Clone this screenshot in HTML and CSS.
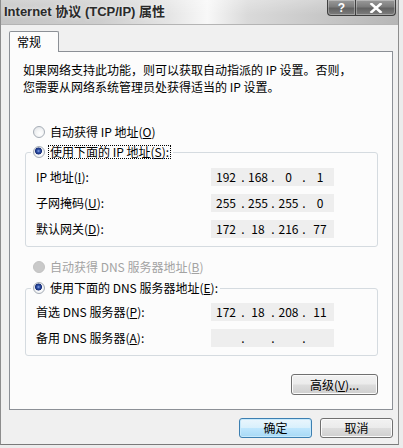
FILE: index.html
```html
<!DOCTYPE html>
<html lang="zh-CN">
<head>
<meta charset="utf-8">
<title>Internet 协议 (TCP/IP) 属性</title>
<link rel="stylesheet" href="styles.css">
</head>
<body>
<div class="window">
  <div class="titlebar">
    <div class="title">Internet 协议 (TCP/IP) 属性</div>
    <div class="tb-buttons">
      <div class="tb-btn help">?</div>
      <div class="tb-btn close">
        <svg width="14" height="10" viewBox="0 0 14 10"><path d="M2.5 1 L11.5 9 M11.5 1 L2.5 9" stroke="#fff" stroke-width="2.6" stroke-linecap="square" fill="none"/></svg>
      </div>
    </div>
  </div>
  <div class="client">
    <div class="tabs"><div class="tab">常规</div></div>
    <div class="panel">
      <div class="desc">
        <div>如果网络支持此功能，则可以获取自动指派的 IP 设置。否则，</div>
        <div>您需要从网络系统管理员处获得适当的 IP 设置。</div>
      </div>

      <div class="opt row-opt"><span class="radio"></span><span class="lbl">自动获得 IP 地址(<u>O</u>)</span></div>

      <fieldset class="group g1">
        <legend><span class="opt"><span class="radio checked"></span><span class="lbl focus">使用下面的 IP 地址(<u>S</u>):</span></span></legend>
        <div class="rows">
          <div class="label">IP 地址(<u>I</u>):</div>
          <div class="ip"><span class="s1">192</span><span class="dot">.</span><span class="s2">168</span><span class="dot">.</span><span class="s3">0</span><span class="dot">.</span><span class="s4">1</span></div>
          <div class="label">子网掩码(<u>U</u>):</div>
          <div class="ip"><span class="s1">255</span><span class="dot">.</span><span class="s2">255</span><span class="dot">.</span><span class="s3">255</span><span class="dot">.</span><span class="s4">0</span></div>
          <div class="label">默认网关(<u>D</u>):</div>
          <div class="ip"><span class="s1">172</span><span class="dot">.</span><span class="s2">18</span><span class="dot">.</span><span class="s3">216</span><span class="dot">.</span><span class="s4">77</span></div>
        </div>
      </fieldset>

      <div class="opt row-opt r3 disabled"><span class="radio off"></span><span class="lbl">自动获得 DNS 服务器地址(<u>B</u>)</span></div>

      <fieldset class="group g2">
        <legend><span class="opt"><span class="radio checked"></span><span class="lbl">使用下面的 DNS 服务器地址(<u>E</u>):</span></span></legend>
        <div class="rows">
          <div class="label">首选 DNS 服务器(<u>P</u>):</div>
          <div class="ip"><span class="s1">172</span><span class="dot">.</span><span class="s2">18</span><span class="dot">.</span><span class="s3">208</span><span class="dot">.</span><span class="s4">11</span></div>
          <div class="label">备用 DNS 服务器(<u>A</u>):</div>
          <div class="ip"><span class="s1"></span><span class="dot">.</span><span class="s2"></span><span class="dot">.</span><span class="s3"></span><span class="dot">.</span><span class="s4"></span></div>
        </div>
      </fieldset>

      <div class="adv-row"><button class="btn adv">高级(<u>V</u>)...</button></div>
    </div>
    <div class="footer">
      <button class="btn default">确定</button>
      <button class="btn">取消</button>
    </div>
  </div>
</div>
</body>
</html>
```

FILE: styles.css
```css
html, body {
  margin: 0;
  padding: 0;
}
body {
  width: 403px;
  height: 448px;
  overflow: hidden;
  background: #ececec;
  font-family: "Noto Sans CJK SC", sans-serif;
  font-size: 12px;
  color: #000;
}
.window {
  box-sizing: border-box;
  width: 399px;
  height: 445px;
  background: #f0f0f0;
  border-left: 1px solid #8d8d8d;
  border-right: 1px solid #8d8d8d;
  border-bottom: 1px solid #7a7a7a;
  display: flex;
  flex-direction: column;
}
.titlebar {
  box-sizing: border-box;
  height: 25px;
  flex: none;
  display: flex;
  justify-content: space-between;
  align-items: flex-start;
  border-bottom: 1px solid #b4b4b4;
  background:
    linear-gradient(to bottom, rgba(255,255,255,0.25), rgba(255,255,255,0) 60%),
    linear-gradient(to right, #c4c4c4 0%, #cecece 25%, #e4e4e4 42%, #f8f8f8 52%, #dadada 62%, #c8c8c8 80%, #b6b6b6 100%);
}
.title {
  font-family: "Liberation Sans", "Noto Sans CJK SC", sans-serif;
  font-weight: bold;
  font-size: 13px;
  color: #2a2a2a;
  line-height: 24px;
  padding-left: 3px;
  text-shadow: 0 0 4px rgba(255,255,255,0.8);
}
.tb-buttons {
  display: flex;
  margin-right: 2px;
}
.tb-btn {
  box-sizing: border-box;
  height: 16px;
  display: flex;
  align-items: center;
  justify-content: center;
  border: 1px solid #3f3f3f;
  border-top: none;
  background: linear-gradient(to bottom, #9a9a9a 0%, #7c7c7c 45%, #626262 55%, #7e7e7e 100%);
  box-shadow: inset 0 0 0 1px rgba(255,255,255,0.3);
  color: #fff;
  font-family: "Liberation Sans", sans-serif;
  font-weight: bold;
  font-size: 12px;
}
.help {
  width: 28px;
  border-bottom-left-radius: 4px;
  border-right: none;
}
.close {
  width: 41px;
  border-bottom-right-radius: 4px;
}
.client {
  flex: 1;
  padding: 6px 5px 0 8px;
  display: flex;
  flex-direction: column;
}
.tabs {
  display: flex;
  margin-bottom: -1px;
}
.tab {
  position: relative;
  z-index: 1;
  box-sizing: border-box;
  width: 50px;
  height: 21px;
  padding-left: 7px;
  line-height: 20px;
  font-size: 12px;
  background: #fcfcfc;
  border: 1px solid #8c9096;
  border-bottom: none;
  border-radius: 2px 2px 0 0;
}
.panel {
  width: 384px;
  box-sizing: border-box;
  background: #fcfcfc;
  border: 1px solid #8c9096;
  padding: 9px 14px 14px 13px;
  display: flex;
  flex-direction: column;
}
.desc {
  line-height: 17px;
  white-space: nowrap;
}
.opt {
  display: inline-flex;
  align-items: center;
  height: 20px;
  white-space: nowrap;
}
.row-opt {
  display: flex;
  margin-left: 10px;
  margin-top: 27px;
}
.r3 {
  margin-top: 10px;
}
.radio {
  box-sizing: border-box;
  width: 12px;
  height: 12px;
  border-radius: 50%;
  border: 1px solid #a6adb6;
  background: radial-gradient(circle at 60% 65%, #ffffff 0, #f4f5f6 40%, #d9dde2 100%);
  margin-right: 4px;
  flex: none;
}
.radio.checked {
  background:
    radial-gradient(circle at 45% 40%, #8aa4e6 0, #2c4fa6 1.6px, #1a2f78 3.2px, rgba(26,47,120,0) 3.8px),
    radial-gradient(circle at 60% 65%, #ffffff 0, #f4f5f6 40%, #d9dde2 100%);
}
.radio.off {
  background: #c9c9c9;
  border-color: #c2c2c2;
}
.disabled .lbl {
  color: #a3a3a3;
}
.lbl {
  line-height: 14px;
  padding-left: 1px;
}
.focus {
  border: 1px dotted #000;
  padding: 0 1px;
  margin-left: -1px;
  line-height: 12px;
}
.group {
  margin: 0 0 0 2px;
  padding: 6px 0 8px 0;
  border: 1px solid #d5dbe0;
  border-radius: 3px;
  min-width: 0;
}
.g2 {
  margin-top: 1px;
  padding-top: 5px;
}
.group legend {
  margin-left: 5px;
  padding: 0 2px;
  height: 20px;
  line-height: 20px;
}
.rows {
  display: grid;
  grid-template-columns: 175px 123px;
  grid-auto-rows: 18px;
  row-gap: 8px;
  padding-left: 10px;
  align-items: center;
}
.label {
  white-space: nowrap;
  line-height: 18px;
}
.ip {
  height: 18px;
  background: #eeeeee;
  display: grid;
  grid-template-columns: 30px 4px 26px 4px 27px 4px 28px;
  line-height: 18px;
  text-align: center;
  font-size: 12px;
}
.adv-row {
  display: flex;
  justify-content: flex-end;
  margin-top: 18px;
}
.btn {
  box-sizing: border-box;
  height: 20px;
  width: 73px;
  padding: 0;
  font-family: "Noto Sans CJK SC", sans-serif;
  font-size: 12px;
  color: #000;
  border: 1px solid #707070;
  border-radius: 3px;
  background: linear-gradient(to bottom, #f2f2f2 0%, #ebebeb 48%, #dddddd 52%, #cfcfcf 100%);
  box-shadow: inset 0 0 0 1px #fbfbfb;
  line-height: 18px;
}
.btn.adv {
  width: 87px;
  height: 21px;
}
.btn.default {
  border-color: #3c7fb1;
  background: linear-gradient(to bottom, #eaf6fd 0%, #d9f0fc 48%, #bee6fd 52%, #a7d9f5 100%);
  box-shadow: inset 0 0 0 1px #c6e9fc;
}
.footer {
  display: flex;
  justify-content: flex-end;
  gap: 8px;
  margin-top: 8px;
  width: 384px;
}
```
